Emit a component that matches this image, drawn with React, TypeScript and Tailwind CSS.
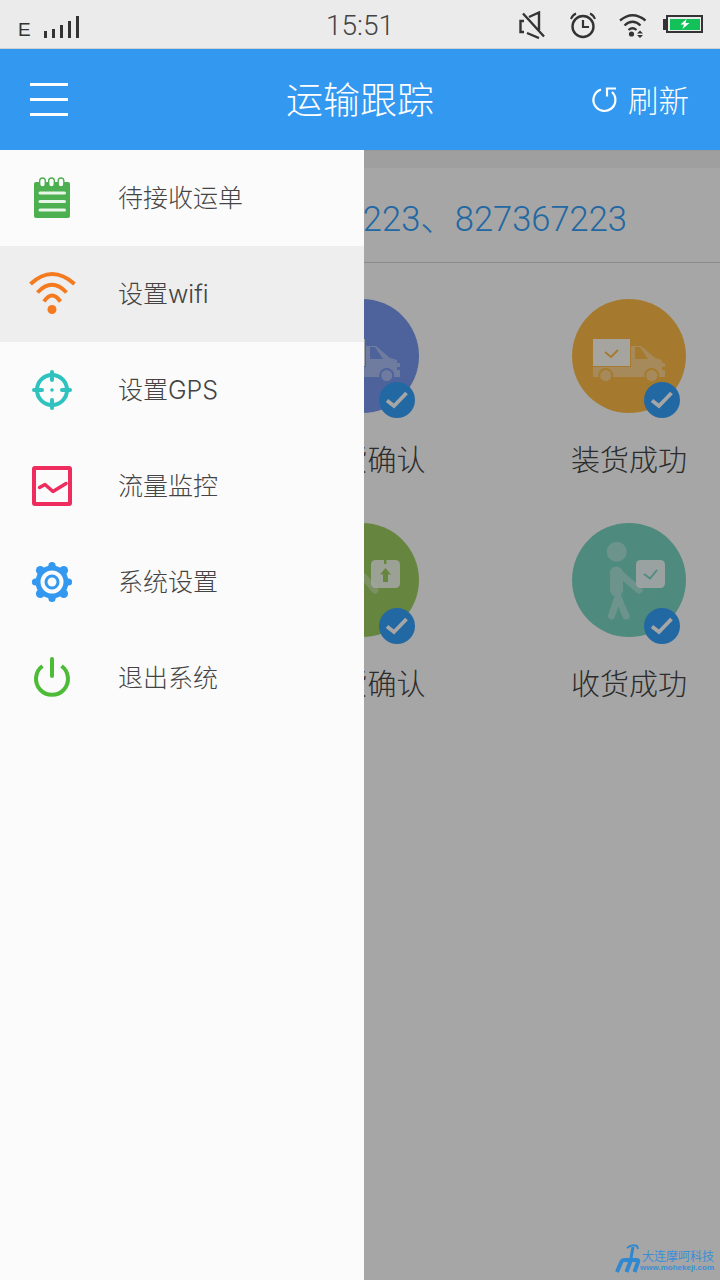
const fontCls = "font-['Roboto','Noto_Sans_CJK_SC',sans-serif]";

const menu = [
  { label: '待接收运单', icon: <NoteIcon /> },
  { label: '设置wifi', icon: <WifiIcon />, active: true },
  { label: '设置GPS', icon: <GpsIcon /> },
  { label: '流量监控', icon: <FlowIcon /> },
  { label: '系统设置', icon: <GearIcon /> },
  { label: '退出系统', icon: <PowerIcon /> },
];

// icon svgs use screen coordinates in their viewBox, it makes them easier to compare with the picture
function NoteIcon() {
  return (
    <svg width="40" height="44" viewBox="32 176 40 44">
      <rect x="34" y="182" width="36" height="36" rx="2" fill="#4caf50" />
      {[42.5, 51.5, 61].map((x) => (
        <rect key={x} x={x - 2.8} y="178" width="5.6" height="9" rx="2.8" fill="#fff" stroke="#4caf50" strokeWidth="1.4" />
      ))}
      {[193, 201.5, 210].map((y) => (
        <path key={y} d={`M40 ${y}H64.500`} stroke="#e8f5e9" strokeWidth="3" strokeLinecap="round" />
      ))}
    </svg>
  );
}

function WifiIcon() {
  return (
    <svg width="52" height="48" viewBox="26 270 52 48" fill="none" stroke="#f47a20" strokeWidth="4">
      <path d="M30.5 284Q52 264 74.500 284" />
      <path d="M37.500 292.500Q52 277 66.500 292.500" />
      <path d="M44 301.500Q52 289.500 60.500 301.500" />
      <circle cx="52" cy="309.500" r="4.500" fill="#f47a20" stroke="none" />
    </svg>
  );
}

function GpsIcon() {
  return (
    <svg width="44" height="44" viewBox="30 368 44 44" fill="none" stroke="#2fc2bf" strokeWidth="4">
      <circle cx="52" cy="390" r="15" />
      <path d="M52 372V380M52 400V408M34 390H42M62 390H70" strokeLinecap="round" />
      <circle cx="52" cy="390" r="1.800" fill="#2fc2bf" stroke="none" />
    </svg>
  );
}

function FlowIcon() {
  return (
    <svg width="40" height="40" viewBox="32 466 40 40" fill="none" stroke="#ee2d5e">
      <rect x="34" y="468" width="36" height="36" strokeWidth="4" rx="1" />
      <path d="M39.500 487.500L45 484.500L53 491.500L66 483.500" strokeWidth="3.500" strokeLinecap="round" strokeLinejoin="round" />
    </svg>
  );
}

function GearIcon() {
  const teeth = [0, 45, 90, 135, 180, 225, 270, 315];
  return (
    <svg width="44" height="44" viewBox="30 560 44 44">
      {teeth.map((a) => {
        const cx = 52 + 16.5 * Math.cos((a * Math.PI) / 180);
        const cy = 582 + 16.5 * Math.sin((a * Math.PI) / 180);
        return <circle key={a} cx={cx} cy={cy} r={a % 90 === 0 ? 3.6 : 4.4} fill="#3398f0" />;
      })}
      <circle cx="52" cy="582" r="16.500" fill="#3398f0" />
      <circle cx="52" cy="582" r="9.500" fill="none" stroke="#fbfbfb" strokeWidth="4" />
      <circle cx="52" cy="582" r="4.500" fill="#fbfbfb" />
    </svg>
  );
}

function PowerIcon() {
  return (
    <svg width="40" height="44" viewBox="32 657 40 44" fill="none" stroke="#4cbb35" strokeWidth="4">
      <path d="M42.500 667A16 16 0 1 0 61.500 667" />
      <path d="M52 660V677" strokeLinecap="round" />
    </svg>
  );
}

function Truck({ body, dx = 0 }: { body: string; dx?: number }) {
  return (
    <svg width="114" height="114" viewBox="572 299 114 114" className="absolute inset-0">
      <g transform={`translate(${dx} 0)`}>
        <path d="M631 346H641L655 358L662 360V363H665V367H662V370H665V377H593V367H631Z" fill="#fff" fillOpacity="0.38" />
        <path d="M635 347H640L648 359H635Z" fill={body} />
        <rect x="593" y="339" width="37" height="27" fill="#fff" fillOpacity="0.95" />
        <path d="M605 352L611 357L618 350" fill="none" stroke={body} strokeWidth="1.800" />
        {[605.7, 651.7].map((cx) => (
          <g key={cx}>
            <circle cx={cx} cy="375.500" r="7.500" fill={body} />
            <circle cx={cx} cy="375.500" r="5.500" fill="#fff" fillOpacity="0.38" />
          </g>
        ))}
      </g>
    </svg>
  );
}

function BoxMan() {
  const color = '#7ad4c2';
  return (
    <svg width="114" height="114" viewBox="572 523 114 114" className="absolute inset-0">
      <circle cx="616.700" cy="551.700" r="10" fill="#fff" fillOpacity="0.35" />
      <g stroke="#fff" strokeLinecap="round" fill="none" opacity="0.35">
        <path d="M616.500 573V590" strokeWidth="13" />
        <path d="M618 572L639 590" strokeWidth="7" />
        <path d="M618 597L611.500 616M618 597L626 616" strokeWidth="7" />
      </g>
      <rect x="636" y="560" width="29" height="28" rx="4.500" fill="#fff" fillOpacity="0.85" />
      <path d="M644 574L650 578.500L657 570" fill="none" stroke={color} strokeWidth="1.800" />
    </svg>
  );
}

function Badge({ cls }: { cls: string }) {
  return (
    <div className={`absolute flex h-9 w-9 items-center justify-center rounded-full bg-[#35a0f9] ${cls}`}>
      <svg width="24" height="20" viewBox="0 0 24 20" fill="none" stroke="#fff" strokeWidth="3.800">
        <path d="M2 10.500L9 16L21.500 3" />
      </svg>
    </div>
  );
}

function Status({ label, circle, badge, labelCls, children }: { label: string; circle: string; badge: string; labelCls?: string; children: React.ReactNode }) {
  return (
    <div className="flex h-[224px] w-[114px] flex-col items-center">
      <div className={`relative h-[114px] w-[114px] shrink-0 rounded-full ${circle}`}>
        {children}
        <Badge cls={badge} />
      </div>
      <div className={`mt-[34px] whitespace-nowrap text-[29px] leading-[29px] font-light text-[#444] ${labelCls ?? ''}`}>{label}</div>
    </div>
  );
}

export default function App() {
  return (
    <div className={`relative flex h-[1280px] w-[720px] flex-col overflow-hidden bg-white ${fontCls}`}>
      {/* status bar */}
      <div className="grid h-[49px] shrink-0 grid-cols-3 items-center border-b border-[#cfcfcf] bg-[#ebebeb] text-[#333]">
        <div className="flex items-end pl-[18px] pt-[6px]">
          <span className="font-['Liberation_Sans',sans-serif] text-[19px] leading-[19px]">E</span>
          <div className="ml-[13px] flex items-end gap-[5px] pb-[1px]">
            <div className="h-[7px] w-[3px] bg-[#333]" />
            <div className="h-[9px] w-[3px] bg-[#333]" />
            <div className="h-[13px] w-[3px] bg-[#333]" />
            <div className="h-[17px] w-[3px] bg-[#333]" />
            <div className="h-[22px] w-[3px] bg-[#333]" />
          </div>
        </div>
        <div className="pt-[4px] text-center text-[28px] leading-[28px] font-light text-[#444]">15:51</div>
        <div className="flex items-center justify-end pr-[17px] pt-[2px]">
          <svg width="28" height="28" viewBox="0 0 28 28" fill="none" stroke="#333" strokeWidth="2.400">
            <path d="M6 10H2.500V21H6M11 6L21 1.500V19M9 22L21 27M5 2.500L26 25.500" />
          </svg>
          <svg width="30" height="28" viewBox="0 0 30 28" fill="none" stroke="#333" strokeWidth="2.400" className="ml-[21px]">
            <circle cx="16" cy="15.500" r="10.500" />
            <path d="M16 9V16H22" strokeWidth="2.200" />
            <path d="M4 8Q5.500 4 9 2.500M28 8Q26.500 4 23 2.500" strokeWidth="2" />
          </svg>
          <svg width="30" height="26" viewBox="0 0 30 26" className="ml-[21px]" fill="none" stroke="#333" strokeWidth="2.300">
            <path d="M2 8.500Q14.500 -2 27.500 8.500M6.500 13.500Q14.500 6 22.500 13.500M10.500 18Q14.500 14.500 18.500 18" />
            <circle cx="13.500" cy="22" r="2.600" fill="#333" stroke="none" />
            <path d="M22 18.500L25 21.500H19ZM22 26L25 23H19Z" fill="#333" stroke="none" />
          </svg>
          <div className="-mt-[2px] ml-[15px] flex items-center">
            <div className="h-[11px] w-[3px] bg-[#333]" />
            <div className="flex h-[18px] w-[37px] items-center justify-center border-[2.500px] border-[#333] p-[1.500px]">
              <div className="flex h-full w-full items-center justify-center bg-[#12c259]">
                <svg width="12" height="10" viewBox="0 0 12 10" fill="#fff">
                  <path d="M7.500 0L1.500 5.500H5L3.500 10L10.500 4H6.500Z" />
                </svg>
              </div>
            </div>
          </div>
        </div>
      </div>

      {/* header */}
      <div className="grid h-[101px] shrink-0 grid-cols-[1fr_auto_1fr] items-center bg-[#3398f0] text-white">
        <div className="flex flex-col gap-[12px] pl-[30px]">
          <div className="h-[3px] w-[38px] bg-white" />
          <div className="h-[3px] w-[38px] bg-white" />
          <div className="h-[3px] w-[38px] bg-white" />
        </div>
        <div className="pt-[4px] text-[37px] leading-[37px] font-light">运输跟踪</div>
        <div className="flex items-center justify-end pr-[31px]">
          <svg width="28" height="28" viewBox="0 0 28 28" fill="none" stroke="#fff" strokeWidth="2.200">
            <path d="M10 3.500A11 11 0 1 0 21 6" />
            <path d="M25 2.500H16V10.500" />
          </svg>
          <span className="ml-[9px] pt-[4px] text-[30.500px] leading-[31px] font-light">刷新</span>
        </div>
      </div>

      {/* page behind the drawer */}
      <div className="relative flex-1 bg-white">
        <div className="h-[1px] bg-[#ececec]" />
        <div className="h-[17px] bg-[#f5f5f5]" />
        <div className="flex h-[95px] items-center justify-end border-b border-[#d6d6d6] pr-[93px] pt-[10px] text-[34.500px] font-light text-[#35a0f9]">
          827367223、827367223
        </div>
        <div className="flex flex-col pl-[305px] pt-[36px]">
          <div className="flex gap-[153px]">
            <Status label="到货确认" circle="bg-[#7898f0]" badge="left-[74px] top-[83px]" labelCls="ml-[11px]">
              <Truck body="#7898f0" dx={2} />
            </Status>
            <Status label="装货成功" circle="bg-[#ffbc47]" badge="left-[72px] top-[83px]">
              <Truck body="#ffbc47" />
            </Status>
          </div>
          <div className="flex gap-[153px]">
            <Status label="卸货确认" circle="bg-[#9dce61]" badge="left-[74px] top-[85px]" labelCls="ml-[11px]">
              <svg width="114" height="114" viewBox="305 523 114 114" className="absolute inset-0">
                <path d="M364 577L375 590" stroke="#fff" strokeOpacity="0.35" strokeWidth="7" strokeLinecap="round" />
                <rect x="371" y="560" width="29" height="28" rx="4.500" fill="#fff" fillOpacity="0.85" />
                <path d="M384 560h2.500v4h-2.500z" fill="#9dce61" />
                <path d="M385.500 568L391 574.500H388V582H383V574.500H380Z" fill="#9dce61" />
              </svg>
            </Status>
            <Status label="收货成功" circle="bg-[#7ad4c2]" badge="left-[72px] top-[85px]">
              <BoxMan />
            </Status>
          </div>
        </div>
        <div className="absolute inset-0 bg-black/35" />

        {/* drawer */}
        <div className="absolute bottom-0 left-0 top-0 w-[364px] bg-[#fbfbfb]">
          {menu.map((m) => (
            <div key={m.label} className={`flex h-[96px] items-center ${m.active ? 'bg-[#eeeeee]' : ''}`}>
              <div className="flex w-[104px] shrink-0 items-center justify-center">{m.icon}</div>
              <span className="ml-[15px] -translate-x-[1px] pt-[1px] font-['Inter','Noto_Sans_CJK_SC',sans-serif] text-[25px] font-light text-[#444]">{m.label}</span>
            </div>
          ))}
        </div>

        {/* watermark */}
        <div className="absolute bottom-[8px] right-[6px] flex items-end">
          <svg width="27" height="32" viewBox="614 1243 27 32" fill="none" stroke="#2f88d0" className="-mb-[3px]">
            <path d="M617 1272L621.500 1261.500Q622.500 1260 625 1260H636.500Q639 1260 638 1262L634.500 1272" strokeWidth="4" />
            <path d="M626.500 1272L630.500 1261" strokeWidth="4" />
            <path d="M630.500 1261L633 1247" strokeWidth="3" />
            <path d="M627 1248Q632 1244 637 1246L638 1249" strokeWidth="2" />
          </svg>
          <div className="flex w-[73px] flex-col items-end text-[#3a8fd6]">
            <span className="text-[12px] leading-[12px]">大连摩呵科技</span>
            <span className="font-['Liberation_Sans',sans-serif] whitespace-nowrap text-[8px] leading-[9px] font-bold">www.mohekeji.com</span>
          </div>
        </div>
      </div>
    </div>
  );
}
